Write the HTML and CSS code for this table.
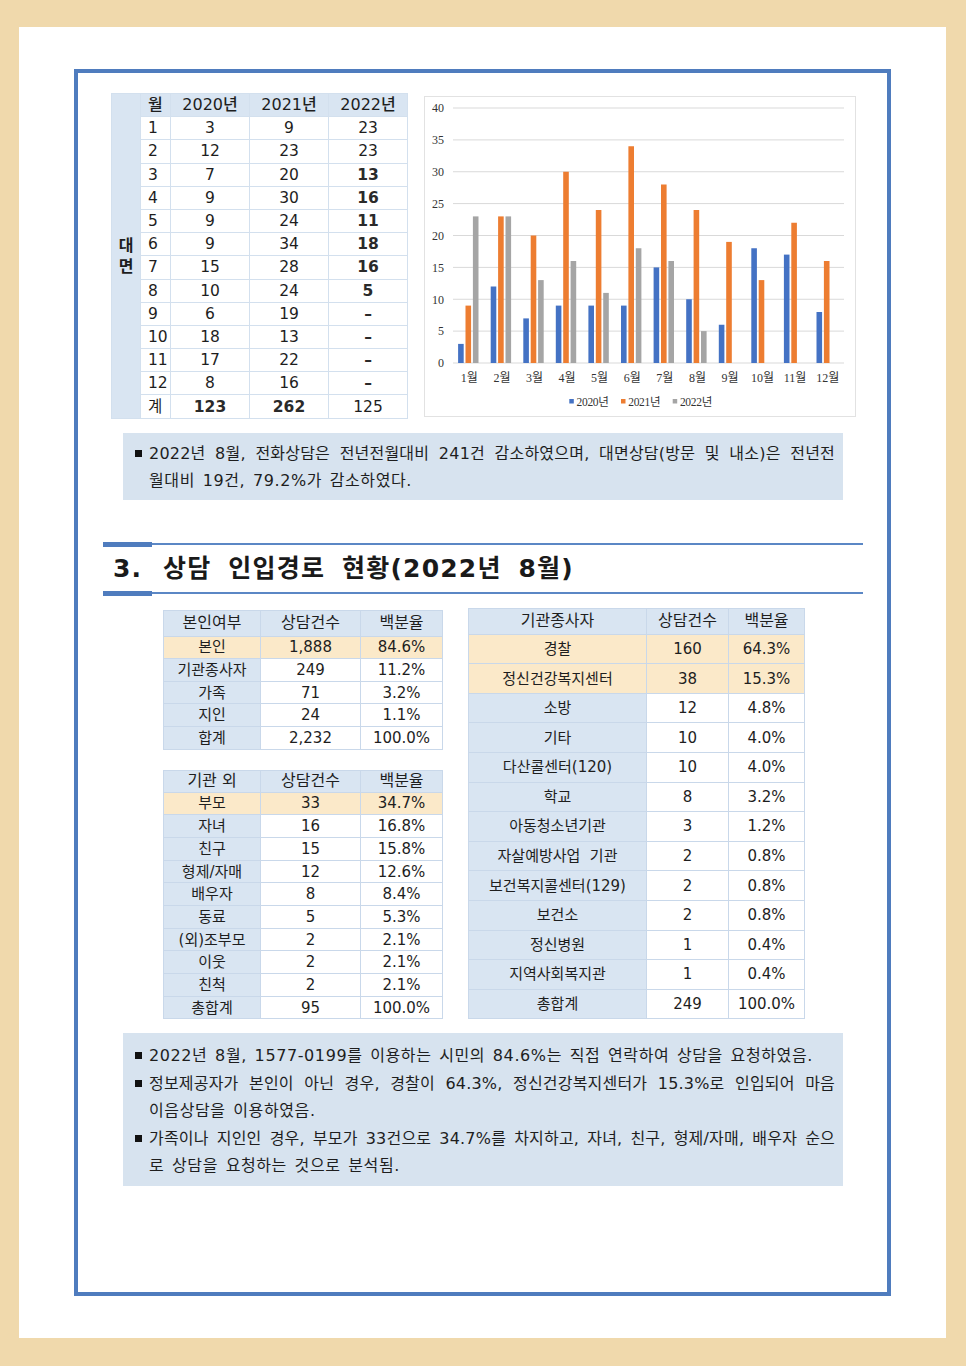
FILE: index.html
```html
<!DOCTYPE html>
<html lang="ko">
<head>
<meta charset="utf-8">
<title>상담 인입경로 현황</title>
<link rel="stylesheet" href="styles.css">
</head>
<body>
<div class="page">
  <div class="frame">
    <div class="top">
      <table class="mt">
        <colgroup><col class="c1"><col class="c2"><col class="c3"><col class="c3"><col class="c3"></colgroup>
        <tr class="hd"><td class="side" rowspan="14">대<br>면</td><td class="m">월</td><td>2020년</td><td>2021년</td><td>2022년</td></tr>
        <tr><td class="m">1</td><td>3</td><td>9</td><td>23</td></tr>
        <tr><td class="m">2</td><td>12</td><td>23</td><td>23</td></tr>
        <tr><td class="m">3</td><td>7</td><td>20</td><td class="b">13</td></tr>
        <tr><td class="m">4</td><td>9</td><td>30</td><td class="b">16</td></tr>
        <tr><td class="m">5</td><td>9</td><td>24</td><td class="b">11</td></tr>
        <tr><td class="m">6</td><td>9</td><td>34</td><td class="b">18</td></tr>
        <tr><td class="m">7</td><td>15</td><td>28</td><td class="b">16</td></tr>
        <tr><td class="m">8</td><td>10</td><td>24</td><td class="b">5</td></tr>
        <tr><td class="m">9</td><td>6</td><td>19</td><td class="b">–</td></tr>
        <tr><td class="m">10</td><td>18</td><td>13</td><td class="b">–</td></tr>
        <tr><td class="m">11</td><td>17</td><td>22</td><td class="b">–</td></tr>
        <tr><td class="m">12</td><td>8</td><td>16</td><td class="b">–</td></tr>
        <tr class="tot"><td class="m">계</td><td class="b">123</td><td class="b">262</td><td>125</td></tr>
      </table>
      <div class="chart">
        <svg width="432" height="321" viewBox="0 0 432 321" xmlns="http://www.w3.org/2000/svg">
          <rect x="0.5" y="0.5" width="431" height="320" fill="#fff" stroke="#e2e2e2"/>
          <g stroke="#d9d9d9" stroke-width="1">
            <line x1="29" x2="420" y1="12" y2="12"/>
            <line x1="29" x2="420" y1="43.9" y2="43.9"/>
            <line x1="29" x2="420" y1="75.75" y2="75.75"/>
            <line x1="29" x2="420" y1="107.6" y2="107.6"/>
            <line x1="29" x2="420" y1="139.5" y2="139.5"/>
            <line x1="29" x2="420" y1="171.4" y2="171.4"/>
            <line x1="29" x2="420" y1="203.25" y2="203.25"/>
            <line x1="29" x2="420" y1="235.1" y2="235.1"/>
            <line x1="29" x2="420" y1="267" y2="267"/>
          </g>
          <g class="ax" text-anchor="end">
            <text x="20" y="16">40</text>
            <text x="20" y="48">35</text>
            <text x="20" y="80">30</text>
            <text x="20" y="112">25</text>
            <text x="20" y="143.5">20</text>
            <text x="20" y="175.5">15</text>
            <text x="20" y="207.5">10</text>
            <text x="20" y="239">5</text>
            <text x="20" y="271">0</text>
          </g>
          <g fill="#4472c4">
            <rect x="34.1" y="247.9" width="5.6" height="19.1"/>
            <rect x="66.7" y="190.5" width="5.6" height="76.5"/>
            <rect x="99.3" y="222.4" width="5.6" height="44.6"/>
            <rect x="131.8" y="209.6" width="5.6" height="57.4"/>
            <rect x="164.4" y="209.6" width="5.6" height="57.4"/>
            <rect x="197.0" y="209.6" width="5.6" height="57.4"/>
            <rect x="229.6" y="171.4" width="5.6" height="95.6"/>
            <rect x="262.2" y="203.25" width="5.6" height="63.75"/>
            <rect x="294.8" y="228.75" width="5.6" height="38.25"/>
            <rect x="327.3" y="152.25" width="5.6" height="114.75"/>
            <rect x="359.9" y="158.6" width="5.6" height="108.4"/>
            <rect x="392.5" y="216" width="5.6" height="51"/>
          </g>
          <g fill="#ed7d31">
            <rect x="41.5" y="209.6" width="5.6" height="57.4"/>
            <rect x="74.1" y="120.4" width="5.6" height="146.6"/>
            <rect x="106.7" y="139.5" width="5.6" height="127.5"/>
            <rect x="139.2" y="75.75" width="5.6" height="191.25"/>
            <rect x="171.8" y="114" width="5.6" height="153"/>
            <rect x="204.4" y="50.25" width="5.6" height="216.75"/>
            <rect x="237.0" y="88.5" width="5.6" height="178.5"/>
            <rect x="269.6" y="114" width="5.6" height="153"/>
            <rect x="302.2" y="145.9" width="5.6" height="121.1"/>
            <rect x="334.7" y="184.1" width="5.6" height="82.9"/>
            <rect x="367.3" y="126.75" width="5.6" height="140.25"/>
            <rect x="399.9" y="165" width="5.6" height="102"/>
          </g>
          <g fill="#a5a5a5">
            <rect x="48.9" y="120.4" width="5.6" height="146.6"/>
            <rect x="81.5" y="120.4" width="5.6" height="146.6"/>
            <rect x="114.1" y="184.1" width="5.6" height="82.9"/>
            <rect x="146.6" y="165" width="5.6" height="102"/>
            <rect x="179.2" y="196.9" width="5.6" height="70.1"/>
            <rect x="211.8" y="152.25" width="5.6" height="114.75"/>
            <rect x="244.4" y="165" width="5.6" height="102"/>
            <rect x="277.0" y="235.1" width="5.6" height="31.9"/>
          </g>
          <g class="ax" text-anchor="middle">
            <text x="45.3" y="285.5">1월</text>
            <text x="77.9" y="285.5">2월</text>
            <text x="110.5" y="285.5">3월</text>
            <text x="143" y="285.5">4월</text>
            <text x="175.6" y="285.5">5월</text>
            <text x="208.2" y="285.5">6월</text>
            <text x="240.8" y="285.5">7월</text>
            <text x="273.4" y="285.5">8월</text>
            <text x="306" y="285.5">9월</text>
            <text x="338.5" y="285.5">10월</text>
            <text x="371.1" y="285.5">11월</text>
            <text x="403.7" y="285.5">12월</text>
          </g>
          <g class="lg">
            <rect x="145.3" y="303" width="4.5" height="4.5" fill="#4472c4"/>
            <text x="152.5" y="309.5">2020년</text>
            <rect x="197" y="303" width="4.5" height="4.5" fill="#ed7d31"/>
            <text x="204.2" y="309.5">2021년</text>
            <rect x="248.7" y="303" width="4.5" height="4.5" fill="#a5a5a5"/>
            <text x="255.9" y="309.5">2022년</text>
          </g>
        </svg>
      </div>
    </div>

    <div class="note note1">
      <div class="item">
        <span class="sq"></span>
        <div class="txt">
          <span class="ln j">2022년 8월, 전화상담은 전년전월대비 241건 감소하였으며, 대면상담(방문 및 내소)은 전년전</span>
          <span class="ln">월대비 19건, 79.2%가 감소하였다.</span>
        </div>
      </div>
    </div>

    <div class="section">
      <div class="rule"></div>
      <h2 class="title"><span class="num">3.</span>상담 인입경로 현황(2022년 8월)</h2>
      <div class="rule"></div>
    </div>

    <div class="tables">
      <div class="leftcol">
        <table class="st ta">
          <colgroup><col class="k1"><col class="k2"><col class="k3"></colgroup>
          <tr class="hd"><td>본인여부</td><td>상담건수</td><td>백분율</td></tr>
          <tr class="hl"><td>본인</td><td>1,888</td><td>84.6%</td></tr>
          <tr><td class="lab">기관종사자</td><td>249</td><td>11.2%</td></tr>
          <tr><td class="lab">가족</td><td>71</td><td>3.2%</td></tr>
          <tr><td class="lab">지인</td><td>24</td><td>1.1%</td></tr>
          <tr><td class="lab">합계</td><td>2,232</td><td>100.0%</td></tr>
        </table>
        <table class="st tb">
          <colgroup><col class="k1"><col class="k2"><col class="k3"></colgroup>
          <tr class="hd"><td>기관 외</td><td>상담건수</td><td>백분율</td></tr>
          <tr class="hl"><td>부모</td><td>33</td><td>34.7%</td></tr>
          <tr><td class="lab">자녀</td><td>16</td><td>16.8%</td></tr>
          <tr><td class="lab">친구</td><td>15</td><td>15.8%</td></tr>
          <tr><td class="lab">형제/자매</td><td>12</td><td>12.6%</td></tr>
          <tr><td class="lab">배우자</td><td>8</td><td>8.4%</td></tr>
          <tr><td class="lab">동료</td><td>5</td><td>5.3%</td></tr>
          <tr><td class="lab">(외)조부모</td><td>2</td><td>2.1%</td></tr>
          <tr><td class="lab">이웃</td><td>2</td><td>2.1%</td></tr>
          <tr><td class="lab">친척</td><td>2</td><td>2.1%</td></tr>
          <tr><td class="lab">총합계</td><td>95</td><td>100.0%</td></tr>
        </table>
      </div>
      <table class="st tc">
        <colgroup><col class="j1"><col class="j2"><col class="j3"></colgroup>
        <tr class="hd"><td>기관종사자</td><td>상담건수</td><td>백분율</td></tr>
        <tr class="hl"><td>경찰</td><td>160</td><td>64.3%</td></tr>
        <tr class="hl"><td>정신건강복지센터</td><td>38</td><td>15.3%</td></tr>
        <tr><td class="lab">소방</td><td>12</td><td>4.8%</td></tr>
        <tr><td class="lab">기타</td><td>10</td><td>4.0%</td></tr>
        <tr><td class="lab">다산콜센터(120)</td><td>10</td><td>4.0%</td></tr>
        <tr><td class="lab">학교</td><td>8</td><td>3.2%</td></tr>
        <tr><td class="lab">아동청소년기관</td><td>3</td><td>1.2%</td></tr>
        <tr><td class="lab">자살예방사업&nbsp; 기관</td><td>2</td><td>0.8%</td></tr>
        <tr><td class="lab">보건복지콜센터(129)</td><td>2</td><td>0.8%</td></tr>
        <tr><td class="lab">보건소</td><td>2</td><td>0.8%</td></tr>
        <tr><td class="lab">정신병원</td><td>1</td><td>0.4%</td></tr>
        <tr><td class="lab">지역사회복지관</td><td>1</td><td>0.4%</td></tr>
        <tr><td class="lab">총합계</td><td>249</td><td>100.0%</td></tr>
      </table>
    </div>

    <div class="note note2">
      <div class="item">
        <span class="sq"></span>
        <div class="txt">
          <span class="ln">2022년 8월, 1577-0199를 이용하는 시민의 84.6%는 직접 연락하여 상담을 요청하였음.</span>
        </div>
      </div>
      <div class="item">
        <span class="sq"></span>
        <div class="txt">
          <span class="ln j">정보제공자가 본인이 아닌 경우, 경찰이 64.3%, 정신건강복지센터가 15.3%로 인입되어 마음</span>
          <span class="ln">이음상담을 이용하였음.</span>
        </div>
      </div>
      <div class="item">
        <span class="sq"></span>
        <div class="txt">
          <span class="ln j">가족이나 지인인 경우, 부모가 33건으로 34.7%를 차지하고, 자녀, 친구, 형제/자매, 배우자 순으</span>
          <span class="ln">로 상담을 요청하는 것으로 분석됨.</span>
        </div>
      </div>
    </div>
  </div>
</div>
</body>
</html>
```

FILE: styles.css
```css
html, body {
  margin: 0;
  padding: 0;
}
body {
  background: #f0d9ac;
  width: 966px;
  height: 1366px;
  overflow: hidden;
  font-family: "Noto Sans CJK KR", sans-serif;
  color: #1e1e1e;
}
.page {
  margin: 27px 0 0 19px;
  width: 927px;
  height: 1311px;
  background: #fff;
  box-sizing: border-box;
  padding: 42px 0 0 55px;
}
.frame {
  width: 817px;
  height: 1227px;
  box-sizing: border-box;
  border: 4px solid #4f7cbe;
}

/* top block */
.top {
  display: flex;
  align-items: flex-start;
  gap: 16px;
  padding: 20px 0 0 33px;
}
.mt {
  border-collapse: collapse;
  table-layout: fixed;
  width: 296px;
  font-family: "DejaVu Sans", "Noto Sans CJK KR", sans-serif;
  font-size: 15.5px;
  border: 1px solid #c3d4e8;
}
.mt col.c1 { width: 29px; }
.mt col.c2 { width: 30px; }
.mt col.c3 { width: 79px; }
.mt tr { height: 23.2px; }
.mt td {
  padding: 0;
  text-align: center;
  border: 1px solid #d3e0ee;
  line-height: 20px;
  white-space: nowrap;
}
.mt td.m { text-align: left; padding-left: 7px; }
.mt .hd td {
  background: #d9e5f2;
  font-weight: 500;
  font-size: 16px;
}
.mt td.side {
  background: #d9e5f2;
  font-weight: 700;
  font-size: 16px;
  line-height: 21px;
  padding-left: 0;
}
.mt td.b { font-weight: 700; color: #2a2a2a; }

.chart {
  margin-top: 3px;
  width: 432px;
  height: 321px;
}
.chart svg { display: block; }
.chart .ax text, .chart .lg text {
  font-family: "Liberation Serif", "Noto Sans CJK KR", serif;
  font-size: 12px;
  fill: #333;
}
.chart .lg text { font-size: 11.5px; letter-spacing: -0.3px; }

/* notes */
.note {
  margin-left: 45px;
  width: 720px;
  box-sizing: border-box;
  background: #d7e3ef;
  padding: 7px 8px 6px 12px;
  font-family: "DejaVu Sans", "Noto Sans CJK KR", sans-serif;
  font-size: 16px;
  line-height: 27px;
  letter-spacing: 0.6px;
  word-spacing: 2px;
}
.note1 { margin-top: 14px; }
.note2 { margin-top: 14px; padding-top: 9px; padding-bottom: 6px; line-height: 27.5px; }
.item { display: flex; align-items: flex-start; }
.sq {
  flex: none;
  width: 7px;
  height: 7px;
  background: #111;
  margin: 10px 7px 0 0;
}
.txt { flex: 1; min-width: 0; }
.ln { display: block; white-space: nowrap; }
.ln.j {
  text-align: justify;
  text-align-last: justify;
  letter-spacing: 0.2px;
  word-spacing: 1px;
}

/* section title */
.section {
  margin: 42px 0 0 25px;
  width: 760px;
}
.rule {
  height: 5px;
  background:
    linear-gradient(#4f7cbe, #4f7cbe) 0 0 / 49px 5px no-repeat,
    linear-gradient(#5b87c5, #5b87c5) 0 1px / 100% 2px no-repeat;
}
.title {
  margin: 0;
  height: 44px;
  line-height: 44px;
  padding-left: 10px;
  font-family: "DejaVu Sans", "Noto Sans CJK KR", sans-serif;
  font-size: 25px;
  font-weight: 700;
  letter-spacing: 1.2px;
  word-spacing: 7px;
  color: #1a1a1a;
}
.title .num { display: inline-block; width: 50px; word-spacing: 0; }

/* lower tables */
.tables {
  display: flex;
  align-items: flex-start;
  gap: 25px;
  margin: 12px 0 0 85px;
}
.leftcol {
  display: flex;
  flex-direction: column;
  gap: 20px;
  margin-top: 2px;
}
.st {
  border-collapse: collapse;
  table-layout: fixed;
  font-family: "DejaVu Sans", "Noto Sans CJK KR", sans-serif;
  font-size: 15px;
  border: 1px solid #b9cce3;
}
.st td {
  padding: 0;
  text-align: center;
  border: 1px solid #c9d8ea;
  white-space: nowrap;
  line-height: 18px;
}
.st .hd td { background: #d9e5f2; font-size: 16px; }
.st td.lab { background: #d9e5f2; }
.st .hl td { background: #fbe9c9; }
.ta, .tb { width: 279px; }
.st col.k1 { width: 97px; }
.st col.k2 { width: 100px; }
.st col.k3 { width: 82px; }
.ta tr { height: 22.6px; }
.ta tr.hd { height: 26px; }
.tb tr { height: 22.7px; }
.tb tr.hd { height: 22px; }
.tc { width: 336px; }
.st col.j1 { width: 178px; }
.st col.j2 { width: 82px; }
.st col.j3 { width: 76px; }
.tc tr { height: 29.6px; }
.tc tr.hd { height: 26px; }
```
